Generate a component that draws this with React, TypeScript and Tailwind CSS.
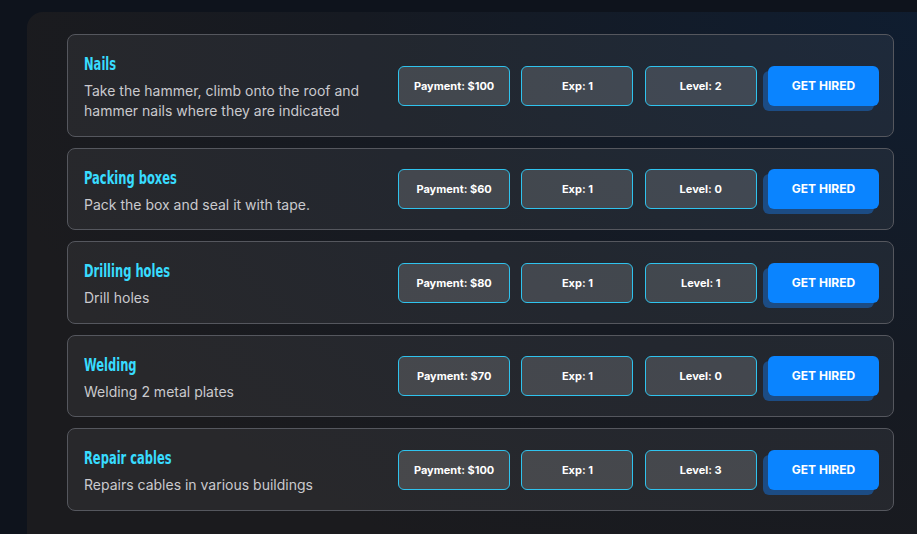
import React from "react";

const jobs = [
  { title: "Nails", desc: "Take the hammer, climb onto the roof and hammer nails where they are indicated", pay: 100, exp: 1, level: 2 },
  { title: "Packing boxes", desc: "Pack the box and seal it with tape.", pay: 60, exp: 1, level: 0 },
  { title: "Drilling holes", desc: "Drill holes", pay: 80, exp: 1, level: 1 },
  { title: "Welding", desc: "Welding 2 metal plates", pay: 70, exp: 1, level: 0 },
  { title: "Repair cables", desc: "Repairs cables in various buildings", pay: 100, exp: 1, level: 3 },
];

function Badge({ children }: { children: React.ReactNode }) {
  return (
    <div className="flex h-[40px] w-[112px] items-center justify-center rounded-[6px] border border-[#2fc3ee] bg-white/[0.15] text-[11px] font-bold text-white">
      {children}
    </div>
  );
}

export default function App() {
  return (
    <div
      className="h-[534px] w-full overflow-hidden bg-[#0e131c] pl-[27px] pt-3"
      style={{ fontFamily: "Inter, 'Noto Sans', sans-serif" }}
    >
      <div className="h-[600px] w-[907px] rounded-2xl bg-[radial-gradient(ellipse_at_100%_0%,#0f1d30_0%,#161a22_45%,#1b1b1e_75%)] px-10 pt-[22px]">
        <div className="flex flex-col gap-[11px]">
          {jobs.map((j) => (
            <div
              key={j.title}
              className="flex items-center rounded-lg border border-[#55575e] bg-white/[0.06] pl-4 pr-[14px]"
            >
              <div className="min-w-0 flex-1 pb-[14.5px] pr-4 pt-[19px]">
                <div className="h-5 whitespace-nowrap leading-5">
                  <span
                    className="inline-block origin-left scale-x-[0.71] text-[18px] font-bold text-[#38dcff]"
                    style={{ fontFamily: "'DejaVu Sans Condensed', 'DejaVu Sans', sans-serif" }}
                  >
                    {j.title}
                  </span>
                </div>
                <div className="mt-[7px] text-[14px] leading-5 text-[#cacace]">{j.desc}</div>
              </div>
              <div className="mt-px flex items-center gap-[11.3px]">
                <Badge>Payment: ${j.pay}</Badge>
                <Badge>Exp: {j.exp}</Badge>
                <Badge>Level: {j.level}</Badge>
                <button className="flex h-[40px] w-[111px] items-center justify-center rounded-[6px] bg-[#0a84ff] text-[12px] font-bold text-white shadow-[-5px_5px_0_#1c4c84]">
                  GET HIRED
                </button>
              </div>
            </div>
          ))}
        </div>
      </div>
    </div>
  );
}
